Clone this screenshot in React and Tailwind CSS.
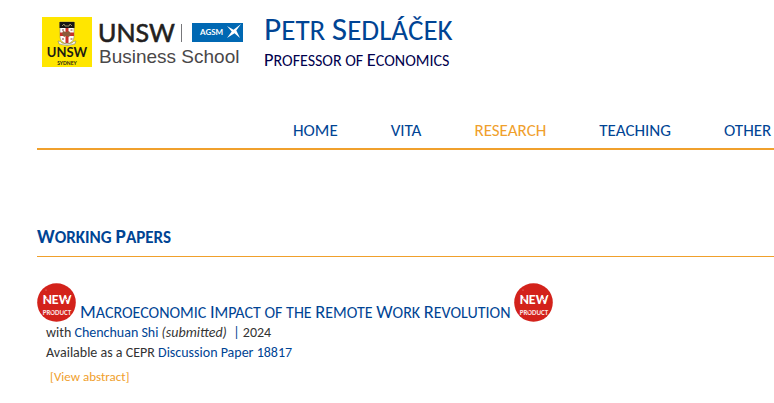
import React from "react";

const navItems = [
  { label: "HOME", href: "#home" },
  { label: "VITA", href: "#vita" },
  { label: "RESEARCH", href: "#research", active: true },
  { label: "TEACHING", href: "#teaching" },
  { label: "OTHER", href: "#other" },
];

// Capitals with a larger first letter; words written in lower case stay small
const SmallCaps = ({ text }) =>
  text.split(" ").map((word, i) => (
    <React.Fragment key={i}>
      {i > 0 && " "}
      <span
        className={
          word[0] === word[0].toUpperCase()
            ? "inline-block uppercase first-letter:text-[115%]"
            : "inline-block uppercase"
        }
      >
        {word}
      </span>
    </React.Fragment>
  ));

const SchoolLogo = () => (
  <svg width="202" height="50" viewBox="0 0 202 50" role="img" aria-label="UNSW Business School">
    <rect width="50" height="50" fill="#ffe600" />
    {/* crest */}
    <path d="M18 5h14v14c0 5-3 7-7 8c-4-1-7-3-7-8z" fill="#fff" stroke="#8a8577" strokeWidth=".6" />
    <path d="M17.500 5h15v6h-15z" fill="#151515" />
    <path d="M20 9l2-2l1 2h4l1-2l2 2" fill="none" stroke="#b8aa78" strokeWidth=".8" />
    <path d="M23.500 11h3v15h-3zM18 15.500h14v3.500H18z" fill="#c9302a" />
    <path d="M21 14l3 1l3-1l2 3l-2 3l-3-1l-2 1l-2-3z" fill="#8b5a3a" />
    <path d="M20 13h2M28.500 13h2M20 22h2M28.500 22h2" stroke="#7b3b35" strokeWidth="1.200" />
    <path d="M16 24q3 0 4 2q5 2 10 0q1-2 4-2l-1 3q-8 3-16 0z" fill="#f5f3e8" stroke="#77735f" strokeWidth=".5" />
    <text x="25" y="40" textAnchor="middle" fontFamily="Lato, sans-serif" fontSize="13" fontWeight="700" fill="#1c1a12">UNSW</text>
    <text x="25" y="48" textAnchor="middle" fontFamily="Lato, sans-serif" fontSize="5" fontWeight="700" fill="#1c1a12">SYDNEY</text>

    <text x="56" y="25" fontFamily="Lato, sans-serif" fontSize="25" fill="#231f20" stroke="#231f20" strokeWidth=".6">UNSW</text>
    <path d="M139.500 7v18" stroke="#77777a" strokeWidth="1" />
    <rect x="150" y="6" width="51" height="19" fill="#0068b3" />
    <text x="158" y="18" fontFamily="Lato, sans-serif" fontSize="8" fontWeight="700" fill="#fff">AGSM</text>
    <path d="M185 9l6.500 3.700l7.500-5.700l-4.700 6.500l3.700 7.500l-5.500-4.700l-7.500 4.700l4.700-6.500z" fill="#fff" />
    <text x="57" y="46" fontFamily="'Liberation Sans', Arial, sans-serif" fontSize="19" fill="#4a4849">Business School</text>
  </svg>
);

const NewBadge = () => (
  <svg width="40" height="40" viewBox="0 0 40 40" role="img" aria-label="New product" className="shrink-0">
    <circle cx="19.500" cy="19.500" r="19.300" fill="#d3221b" />
    <text x="20" y="21" textAnchor="middle" fontFamily="Carlito, Lato, sans-serif" fontSize="14" fontWeight="700" fill="#fff">NEW</text>
    <text x="20" y="32" textAnchor="middle" fontFamily="Carlito, Lato, sans-serif" fontSize="7" fontWeight="700" fill="#fbe4e2">PRODUCT</text>
    <path d="M9 15l2 1M29 17l2-2M33 12l-2 1M14 29l1-2M25 26l1 2" stroke="#d3221b" strokeWidth=".8" />
    <circle cx="9" cy="7" r=".5" fill="#f3aaa6" />
  </svg>
);

const App = () => {
  return (
    <div className="overflow-x-hidden bg-white pb-4 pl-[37px] font-['Carlito',Lato,sans-serif] text-[#333]">
      <header>
        <div className="flex gap-5 pt-[11px] pl-[5px]">
          <a href="#school" className="shrink-0 pt-[6px]">
            <SchoolLogo />
          </a>
          <div>
            <h1 className="text-[29px] leading-9 text-[#004494]">
              <SmallCaps text="Petr Sedláček" />
            </h1>
            <p className="text-[16px] leading-6 text-[#00004d]">
              <SmallCaps text="Professor of Economics" />
            </p>
          </div>
        </div>
        <nav className="mt-[46px] border-b-2 border-b-[#f0a02c] pb-[5px] pl-64">
          <ul className="flex gap-[53px] text-[17px] leading-6">
            {navItems.map((item) => (
              <li key={item.label}>
                <a href={item.href} className={item.active ? "text-[#f0a02c]" : "text-[#004494]"}>
                  {item.label}
                </a>
              </li>
            ))}
          </ul>
        </nav>
      </header>

      <main className="pt-[74px]">
        <h2 className="h-[33px] border-b border-b-[#f0a02c] text-[17px] leading-6 font-bold text-[#004494]">
          <SmallCaps text="Working Papers" />
        </h2>
        <article className="pt-[26px]">
          <div className="flex items-start">
            <NewBadge />
            <h3 className="mt-[18px] mr-1 ml-[3px] h-[22px] text-[16px] leading-[22px] whitespace-nowrap">
              <a href="#remote-work" className="text-[#004494]">
                <SmallCaps text="Macroeconomic Impact of the Remote Work Revolution" />
              </a>
            </h3>
            <NewBadge />
          </div>
          <div className="pl-[9px] text-[14px] leading-5">
            <p>
              with <a href="#shi" className="text-[#004494]">Chenchuan Shi</a> <em>(submitted)</em>
              &nbsp; <span className="text-[#004494]">|</span> 2024
            </p>
            <p>
              Available as a CEPR <a href="#dp18817" className="text-[#004494]">Discussion Paper 18817</a>
            </p>
            <button type="button" className="mt-1 ml-1 text-[13px] leading-5 text-[#f0a02c]">
              [View abstract]
            </button>
          </div>
        </article>
      </main>
    </div>
  );
};

export default App;
